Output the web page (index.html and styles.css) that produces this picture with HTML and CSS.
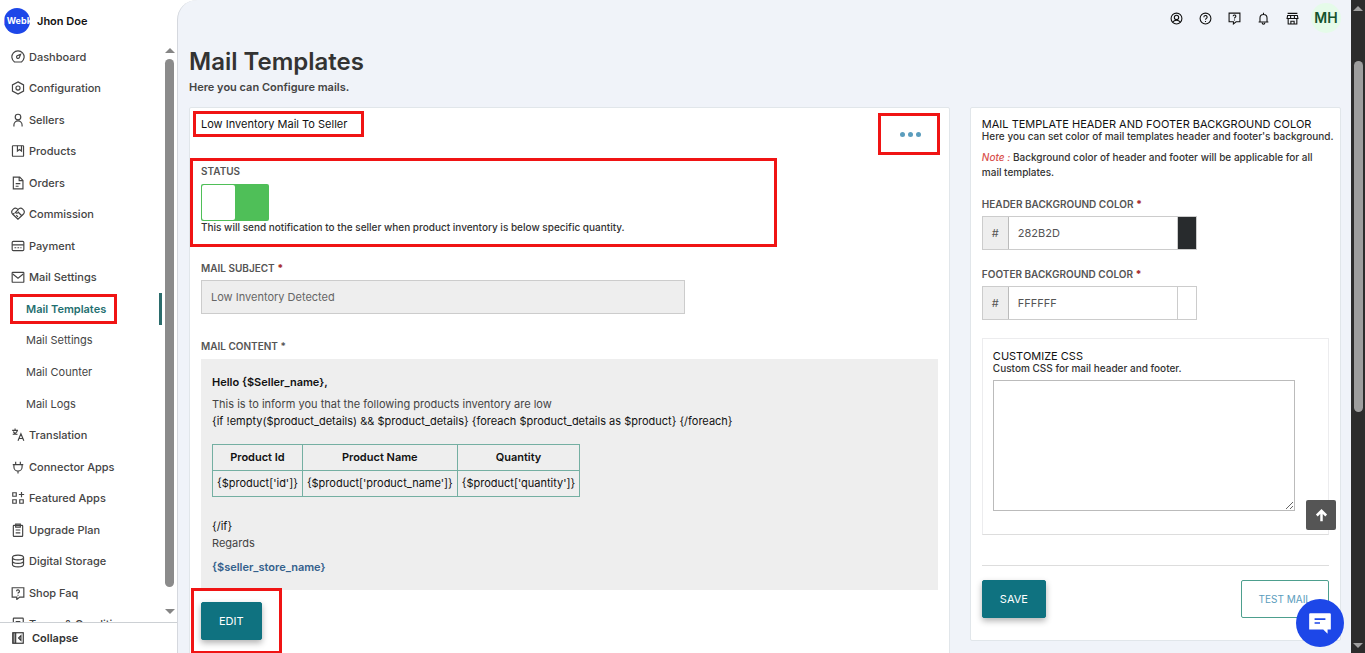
FILE: index.html
```html
<!DOCTYPE html>
<html lang="en">
<head>
    <meta charset="UTF-8">
    <meta name="viewport" content="width=device-width, initial-scale=1.0">
    <title>Mail Templates</title>
    <link rel="stylesheet" href="styles.css">
</head>
<body>

<div class="app">
    <aside class="sidebar">
        <div class="user">
            <span class="avatar"><span>l Webk</span></span>
            <strong>Jhon Doe</strong>
        </div>
        <div class="nav-wrap">
            <nav class="nav">
                <a href="#"><svg class="icon" viewBox="0 0 24 24"><path d="M6 20.5h12a10.5 10.5 0 1 0-12 0z"/><path d="M16.5 7.5l-2.5 6a2.5 2.5 0 1 1-3.5-3.5z"/></svg>Dashboard</a>
                <a href="#"><svg class="icon" viewBox="0 0 24 24"><path d="M12 1.5l9.5 5.3v10.4L12 22.5l-9.5-5.3V6.800z"/><circle cx="12" cy="12" r="3.500"/></svg>Configuration</a>
                <a href="#"><svg class="icon" viewBox="0 0 24 24"><circle cx="12" cy="7" r="4.800"/><path d="M5 23v-2.500a7 7 0 0 1 14 0V23"/></svg>Sellers</a>
                <a href="#"><svg class="icon" viewBox="0 0 24 24"><rect x="2.500" y="3" width="19" height="18" rx="1"/><path d="M11 3v9l3.500-2.500L18 12V3"/></svg>Products</a>
                <a href="#"><svg class="icon" viewBox="0 0 24 24"><path d="M4 2h11l5.500 5.500V22H4zM14 2v6h6M8 13h8M8 17.500h5"/></svg>Orders</a>
                <a href="#"><svg class="icon" viewBox="0 0 24 24"><path d="M12 21L3 12.500a5.800 5.800 0 0 1 9-8 5.800 5.800 0 0 1 9 8z"/><path d="M12 5L7.500 9.500c2 2 4 1 5-.5l6 6M9 14l3 3M3 12l3-1"/></svg>Commission</a>
                <a href="#"><svg class="icon" viewBox="0 0 24 24"><rect x="2" y="4" width="20" height="16" rx="2"/><path d="M2 10h20M6 15h3M11 15h3M16 15h2"/></svg>Payment</a>
                <a href="#"><svg class="icon" viewBox="0 0 24 24"><rect x="2" y="4" width="20" height="17" rx="1"/><path d="M3 7l9 7 9-7"/></svg>Mail Settings</a>
                <a href="#" class="sub active"><span class="mark mark-link">Mail Templates</span></a>
                <a href="#" class="sub">Mail Settings</a>
                <a href="#" class="sub">Mail Counter</a>
                <a href="#" class="sub">Mail Logs</a>
                <a href="#"><svg class="icon" viewBox="0 0 24 24"><path d="M2 4h10M7 1v3M11 4c-1 4-4 6-8 7M4 6c2 4 4 5 7 5M12 22l5-12 5 12M14 18h6"/></svg>Translation</a>
                <a href="#"><svg class="icon" viewBox="0 0 24 24"><path d="M3 8h18M5 8v4a7 7 0 0 0 14 0V8M8 8V3M16 8V3M12 19v4"/></svg>Connector Apps</a>
                <a href="#"><svg class="icon" viewBox="0 0 24 24"><path d="M3 3h6v6H3zM3 15h6v6H3zM15 15h6v6h-6zM18 1.500v9M13.500 6h9"/></svg>Featured Apps</a>
                <a href="#"><svg class="icon" viewBox="0 0 24 24"><rect x="4" y="4" width="16" height="19" rx="1"/><path d="M8 2h8v5H8zM8 12h8M8 17h8"/></svg>Upgrade Plan</a>
                <a href="#"><svg class="icon" viewBox="0 0 24 24"><ellipse cx="12" cy="6" rx="9.500" ry="4"/><path d="M2.500 6v12c0 5.500 19 5.500 19 0V6M2.500 12c0 5.500 19 5.500 19 0"/></svg>Digital Storage</a>
                <a href="#"><svg class="icon" viewBox="0 0 24 24"><path d="M2 3h20v16h-7l-5 4v-4H2z"/><path d="M9.500 9a2.500 2.500 0 1 1 3.500 2.300c-1 .5-1 1-1 1.700M12 15v1.500"/></svg>Shop Faq</a>
                <a href="#"><svg class="icon" viewBox="0 0 24 24"><rect x="4" y="2" width="17" height="20" rx="1"/><path d="M8 8h8M8 13h8"/></svg>Terms &amp; Conditions</a>
            </nav>
            <div class="scrollbar">
                <i class="arrow-up"></i>
                <div class="track"><div class="thumb"></div></div>
                <i class="arrow-down"></i>
            </div>
        </div>
        <button class="collapse" type="button"><svg class="icon" viewBox="0 0 24 24"><rect x="3" y="3" width="18" height="18"/><path d="M8 3v18M5 3v18M17 8l-4 4 4 4z"/></svg>Collapse</button>
    </aside>

    <main class="main">
        <header class="topbar">
            <div class="top-icons">
                <a href="#" aria-label="Account"><svg class="icon" viewBox="0 0 24 24"><circle cx="12" cy="12" r="10"/><circle cx="12" cy="10" r="4"/><path d="M5 19c3-5 11-5 14 0"/></svg></a>
                <a href="#" aria-label="Help"><svg class="icon" viewBox="0 0 24 24"><circle cx="12" cy="12" r="10"/><path d="M9 9.500a3 3 0 1 1 4.500 2.500c-1.500.8-1.500 1.300-1.500 2.500M12 16.500v2"/></svg></a>
                <a href="#" aria-label="FAQ"><svg class="icon" viewBox="0 0 24 24"><path d="M2 2h20v16h-7l-5 4v-4H2z"/><path d="M9.500 8a2.500 2.500 0 1 1 3.500 2.300c-1 .5-1 1-1 1.700M12 14v1.500"/></svg></a>
                <a href="#" aria-label="Notifications"><svg class="icon" viewBox="0 0 24 24"><path d="M3 18.500h18M5.500 18v-7a6.500 6.500 0 0 1 13 0v7M12 4.500V1.500M9.500 20a2.500 2.500 0 0 0 5 0"/></svg></a>
                <a href="#" aria-label="Store"><svg class="icon" viewBox="0 0 24 24"><path d="M3 2.500h18M3 6.500h18l1 5.500H2zM4 12v10h16V12M8.500 7v5M15.500 7v5M9 22v-5h6v5"/></svg></a>
            </div>
            <span class="initials">MH</span>
        </header>

        <div class="page-head">
            <h1>Mail Templates</h1>
            <p>Here you can Configure mails.</p>
        </div>

        <div class="columns">
            <section class="panel">
                <div class="panel-head">
                    <h2 class="mark mark-title">Low Inventory Mail To Seller</h2>
                    <button class="more mark mark-more" type="button" aria-label="More options"><i></i><i></i><i></i></button>
                </div>

                <div class="status mark mark-status">
                    <label for="status">STATUS</label>
                    <input type="checkbox" id="status" class="toggle" checked>
                    <p class="hint">This will send notification to the seller when product inventory is below specific quantity.</p>
                </div>

                <div class="field subject">
                    <label for="subject">MAIL SUBJECT <b>*</b></label>
                    <input type="text" id="subject" value="Low Inventory Detected" disabled>
                </div>

                <div class="field content">
                    <h3>MAIL CONTENT *</h3>
                    <div class="preview">
                        <p class="hello">Hello {$Seller_name},</p>
                        <p class="grey">This is to inform you that the following products inventory are low</p>
                        <p>{if !empty($product_details) &amp;&amp; $product_details} {foreach $product_details as $product} {/foreach}</p>
                        <table>
                            <tr><th>Product Id</th><th>Product Name</th><th>Quantity</th></tr>
                            <tr><td>{$product['id']}</td><td>{$product['product_name']}</td><td>{$product['quantity']}</td></tr>
                        </table>
                        <p>{/if}</p>
                        <p class="grey">Regards</p>
                        <p class="store">{$seller_store_name}</p>
                    </div>
                </div>

                <div class="mark mark-edit">
                    <button class="btn" type="button">EDIT</button>
                </div>
            </section>

            <section class="panel settings">
                <h2>MAIL TEMPLATE HEADER AND FOOTER BACKGROUND COLOR</h2>
                <p class="hint">Here you can set color of mail templates header and footer's background.</p>
                <p class="note"><em>Note :</em> Background color of header and footer will be applicable for all mail templates.</p>

                <div class="color-field">
                    <label for="headerColor">HEADER BACKGROUND COLOR <b>*</b></label>
                    <div class="color-group">
                        <span class="hash">#</span>
                        <input type="text" id="headerColor" value="282B2D">
                        <span class="swatch dark"></span>
                    </div>
                </div>
                <div class="color-field">
                    <label for="footerColor">FOOTER BACKGROUND COLOR <b>*</b></label>
                    <div class="color-group">
                        <span class="hash">#</span>
                        <input type="text" id="footerColor" value="FFFFFF">
                        <span class="swatch"></span>
                    </div>
                </div>

                <div class="css-card">
                    <h2><label for="customCss">CUSTOMIZE CSS</label></h2>
                    <p class="hint">Custom CSS for mail header and footer.</p>
                    <textarea id="customCss"></textarea>
                </div>

                <div class="actions">
                    <button class="btn" type="button">SAVE</button>
                    <button class="btn outline" type="button">TEST MAIL</button>
                </div>
            </section>
        </div>
    </main>

    <div class="scrollbar page-scroll">
        <i class="arrow-up"></i>
        <div class="track"><div class="thumb"></div></div>
        <i class="arrow-down"></i>
    </div>
</div>

<button class="to-top" type="button" aria-label="Back to top"><svg viewBox="0 0 24 24"><path d="M12 21V5M4.500 12L12 4.500l7.500 7.500"/></svg></button>
<button class="chat" type="button" aria-label="Chat"><svg viewBox="0 0 24 24"><path fill="#fff" d="M3 3h18q1 0 1 1v14h-3v4l-4-4H2V4q0-1 1-1z"/><path stroke="#1d47e8" stroke-width="1.600" d="M7 8.500h10M7 12h5"/></svg></button>

</body>
</html>
```
FILE: styles.css
```css
* {
    box-sizing: border-box;
}
body {
    margin: 0;
    font-family: Inter, "Liberation Sans", sans-serif;
    font-size: 11px;
    line-height: 16px;
    color: #111;
    overflow: hidden;
}
h1, h2, h3, p {
    margin: 0;
}
button, input, textarea {
    font: inherit;
}
button {
    cursor: pointer;
}
a {
    color: inherit;
    text-decoration: none;
}
.app {
    display: flex;
    height: 100vh;
    background: #fff;
}
.icon {
    width: 14px;
    height: 14px;
    flex: none;
    fill: none;
    stroke: currentColor;
    stroke-width: 2;
}

/* red callout frames drawn over the content */
.mark {
    position: relative;
}
.mark::after {
    content: "";
    position: absolute;
    border: 3px solid #f01414;
    pointer-events: none;
}
.mark-link::after {
    inset: -7px -11px -7px -16px;
}
.mark-title::after {
    inset: -5px -17px -5px -8px;
}
.mark-more::after {
    inset: -12px -19px -12px -22px;
}
.mark-status::after {
    inset: -5px 161px -14px -11px;
}
.mark-edit::after {
    inset: -14px -20px -14px -10px;
}

/* sidebar */
.sidebar {
    display: flex;
    flex-direction: column;
    flex: none;
    width: 177px;
}
.user {
    display: flex;
    align-items: center;
    gap: 7px;
    height: 41px;
    padding-left: 4px;
}
.user strong {
    font-weight: 600;
}
.avatar {
    display: flex;
    justify-content: center;
    align-items: center;
    width: 26px;
    height: 26px;
    border-radius: 50%;
    background: #1d47e8;
    color: #fff;
    font-size: 9px;
    font-weight: 700;
    overflow: hidden;
    white-space: nowrap;
}
.avatar span {
    flex: none;
}
.nav-wrap {
    display: flex;
    flex: 1;
    min-height: 0;
    overflow: hidden;
}
.nav {
    display: grid;
    grid-auto-rows: 1fr;
    flex: 1;
    height: 599px;
    color: #444;
    font-weight: 500;
}
.nav a {
    display: flex;
    align-items: center;
    gap: 4px;
    padding-left: 11px;
    white-space: nowrap;
}
.nav .sub {
    padding-left: 26px;
    font-weight: 400;
}
.nav .active {
    border-right: 3px solid #2b6c6c;
    color: #1f6f70;
    font-weight: 600;
}
.scrollbar {
    display: flex;
    flex-direction: column;
    align-items: center;
    gap: 6px;
    width: 15px;
    padding: 7px 0 8px;
    color: #858585;
}
.track {
    flex: 1;
    width: 9px;
}
.thumb {
    height: 97%;
    border-radius: 5px;
    background: #8b8b8b;
}
.arrow-up, .arrow-down {
    border: 5px solid transparent;
}
.arrow-up {
    border-top: 0;
    border-bottom-color: currentColor;
}
.arrow-down {
    border-bottom: 0;
    border-top-color: currentColor;
}
.collapse {
    display: flex;
    align-items: center;
    gap: 7px;
    height: 31px;
    padding: 0 11px;
    border: 0;
    border-top: 1px solid #ccd0d4;
    background: #fff;
    color: #333;
    font-weight: 600;
}

/* main area */
.main {
    flex: 1;
    min-width: 0;
    padding: 0 10px 0 11px;
    border-left: 1px solid #d5d8de;
    border-top-left-radius: 20px;
    background: #f0f3f9;
    overflow: hidden;
}
.topbar {
    display: flex;
    justify-content: flex-end;
    align-items: center;
    gap: 12px;
    height: 36px;
}
.top-icons {
    display: flex;
    gap: 16px;
}
.top-icons a {
    display: flex;
}
.top-icons .icon {
    width: 13px;
    height: 13px;
}
.initials {
    display: flex;
    justify-content: center;
    align-items: center;
    width: 30px;
    height: 30px;
    border-radius: 50%;
    background: #e5fbe9;
    color: #14532d;
    font-size: 14px;
    font-weight: 600;
}
.page-head {
    padding-top: 10px;
    color: #333;
}
.page-head h1 {
    font-size: 24px;
    font-weight: 600;
    line-height: 32px;
}
.page-head p {
    margin: 1px 0 12px;
    font-weight: 600;
    color: #444;
}
.columns {
    display: grid;
    grid-template-columns: minmax(0, 41fr) minmax(0, 20fr);
    gap: 20px;
    align-items: start;
}
.panel {
    padding: 8px 11px 14px;
    border: 1px solid #e1e6ea;
    border-radius: 2px;
    background: #fff;
}
.panel h2 {
    font-size: 11px;
    font-weight: 400;
}
.panel label, .panel h3 {
    display: block;
    color: #555;
    font-size: 10px;
    font-weight: 600;
    line-height: 16px;
}
.panel label b {
    color: #a33;
}
.panel-head {
    display: flex;
    justify-content: space-between;
    align-items: flex-start;
    height: 47px;
}
.more {
    display: flex;
    align-items: center;
    gap: 3px;
    height: 18px;
    margin: 9px 17px 0 0;
    padding: 0;
    border: 0;
    background: none;
}
.more i {
    width: 5px;
    height: 5px;
    border-radius: 50%;
    background: #5b9dbd;
}
.hint {
    color: #333;
    font-size: 10px;
    font-weight: 500;
    line-height: 12px;
    white-space: nowrap;
}
.toggle {
    display: block;
    appearance: none;
    width: 68px;
    height: 37px;
    margin: 5px 0 0;
    padding: 1px;
    border-radius: 2px;
    background: #4fbf58;
}
.toggle::before {
    content: "";
    display: block;
    width: 33px;
    height: 35px;
    border-radius: 2px;
    background: #fff;
}
.field {
    margin-top: 24px;
}
.subject {
    margin-top: 27px;
}
.field input {
    display: block;
    width: 100%;
    max-width: 484px;
    height: 34px;
    margin-top: 4px;
    padding: 0 9px;
    border: 1px solid #ccc;
    background: #eee;
    color: #666;
}
.preview {
    margin-top: 5px;
    padding: 15px 11px 14px;
    background: #eee;
    line-height: 17px;
}
.preview .hello {
    margin-bottom: 5px;
    font-weight: 600;
}
.preview .grey {
    color: #444;
}
.preview table {
    margin: 14px 0 21px;
    border-collapse: collapse;
}
.preview th, .preview td {
    height: 26px;
    padding: 0 4px;
    border: 1px solid #74afa2;
    text-align: center;
}
.preview th {
    font-weight: 600;
}
.preview .store {
    margin-top: 7px;
    color: #34608c;
    font-weight: 600;
}
.btn {
    height: 38px;
    padding: 0 17px;
    border: 1px solid #0f7280;
    border-radius: 2px;
    background: #0f7280;
    color: #fff;
    box-shadow: 0 3px 6px rgba(0, 0, 0, 0.3);
}
.mark-edit {
    width: fit-content;
    margin-top: 12px;
}

/* header and footer colours */
.settings {
    padding: 10px 11px 22px;
}
.settings h2, .settings h2 label {
    font-size: 11px;
    font-weight: 400;
    line-height: 12px;
    color: #111;
}
.note {
    margin-top: 8px;
    color: #333;
    font-size: 10px;
    font-weight: 500;
    line-height: 15px;
}
.note em {
    color: #d9534f;
}
.color-field {
    margin-top: 16px;
}
.color-group {
    display: flex;
    width: 62%;
    height: 34px;
    margin-top: 4px;
    border: 1px solid #ccc;
}
.hash {
    width: 26px;
    border-right: 1px solid #bbb;
    background: #eee;
    color: #555;
    line-height: 32px;
    text-align: center;
}
.color-group input {
    flex: 1;
    min-width: 0;
    padding: 0 9px;
    border: 0;
    color: #555;
}
.swatch {
    width: 19px;
    border-left: 1px solid #ccc;
}
.swatch.dark {
    background: #282b2d;
}
.css-card {
    margin-top: 18px;
    padding: 11px 10px 23px;
    border: 1px solid #ececee;
    border-bottom-color: #ddd;
}
.css-card textarea {
    display: block;
    width: 93%;
    height: 131px;
    margin-top: 6px;
    border: 1px solid #bbb;
    background: #fff;
}
.actions {
    display: flex;
    justify-content: space-between;
    margin-top: 30px;
    padding-top: 14px;
    border-top: 1px solid #ddd;
}
.btn.outline {
    border-color: #4d9f8e;
    background: #fff;
    color: #5b9dbd;
    font-size: 10px;
    box-shadow: none;
}

/* window scrollbar */
.page-scroll {
    flex: none;
    width: 14px;
    padding: 6px 0 5px;
    background: #2c2c2c;
    color: #a0a0a0;
}
.page-scroll .track {
    padding-top: 44px;
}
.page-scroll .thumb {
    height: 61%;
    background: #9e9e9e;
}

.to-top, .chat {
    position: fixed;
    display: flex;
    justify-content: center;
    align-items: center;
    padding: 0;
    border: 0;
}
.to-top {
    right: 29px;
    bottom: 123px;
    width: 30px;
    height: 30px;
    border-radius: 2px;
    background: #555;
}
.to-top svg {
    width: 15px;
    height: 15px;
    fill: none;
    stroke: #fff;
    stroke-width: 4;
}
.chat {
    right: 21px;
    bottom: 6px;
    width: 48px;
    height: 48px;
    border-radius: 50%;
    background: #1d47e8;
}
.chat svg {
    width: 26px;
    height: 26px;
}
```
